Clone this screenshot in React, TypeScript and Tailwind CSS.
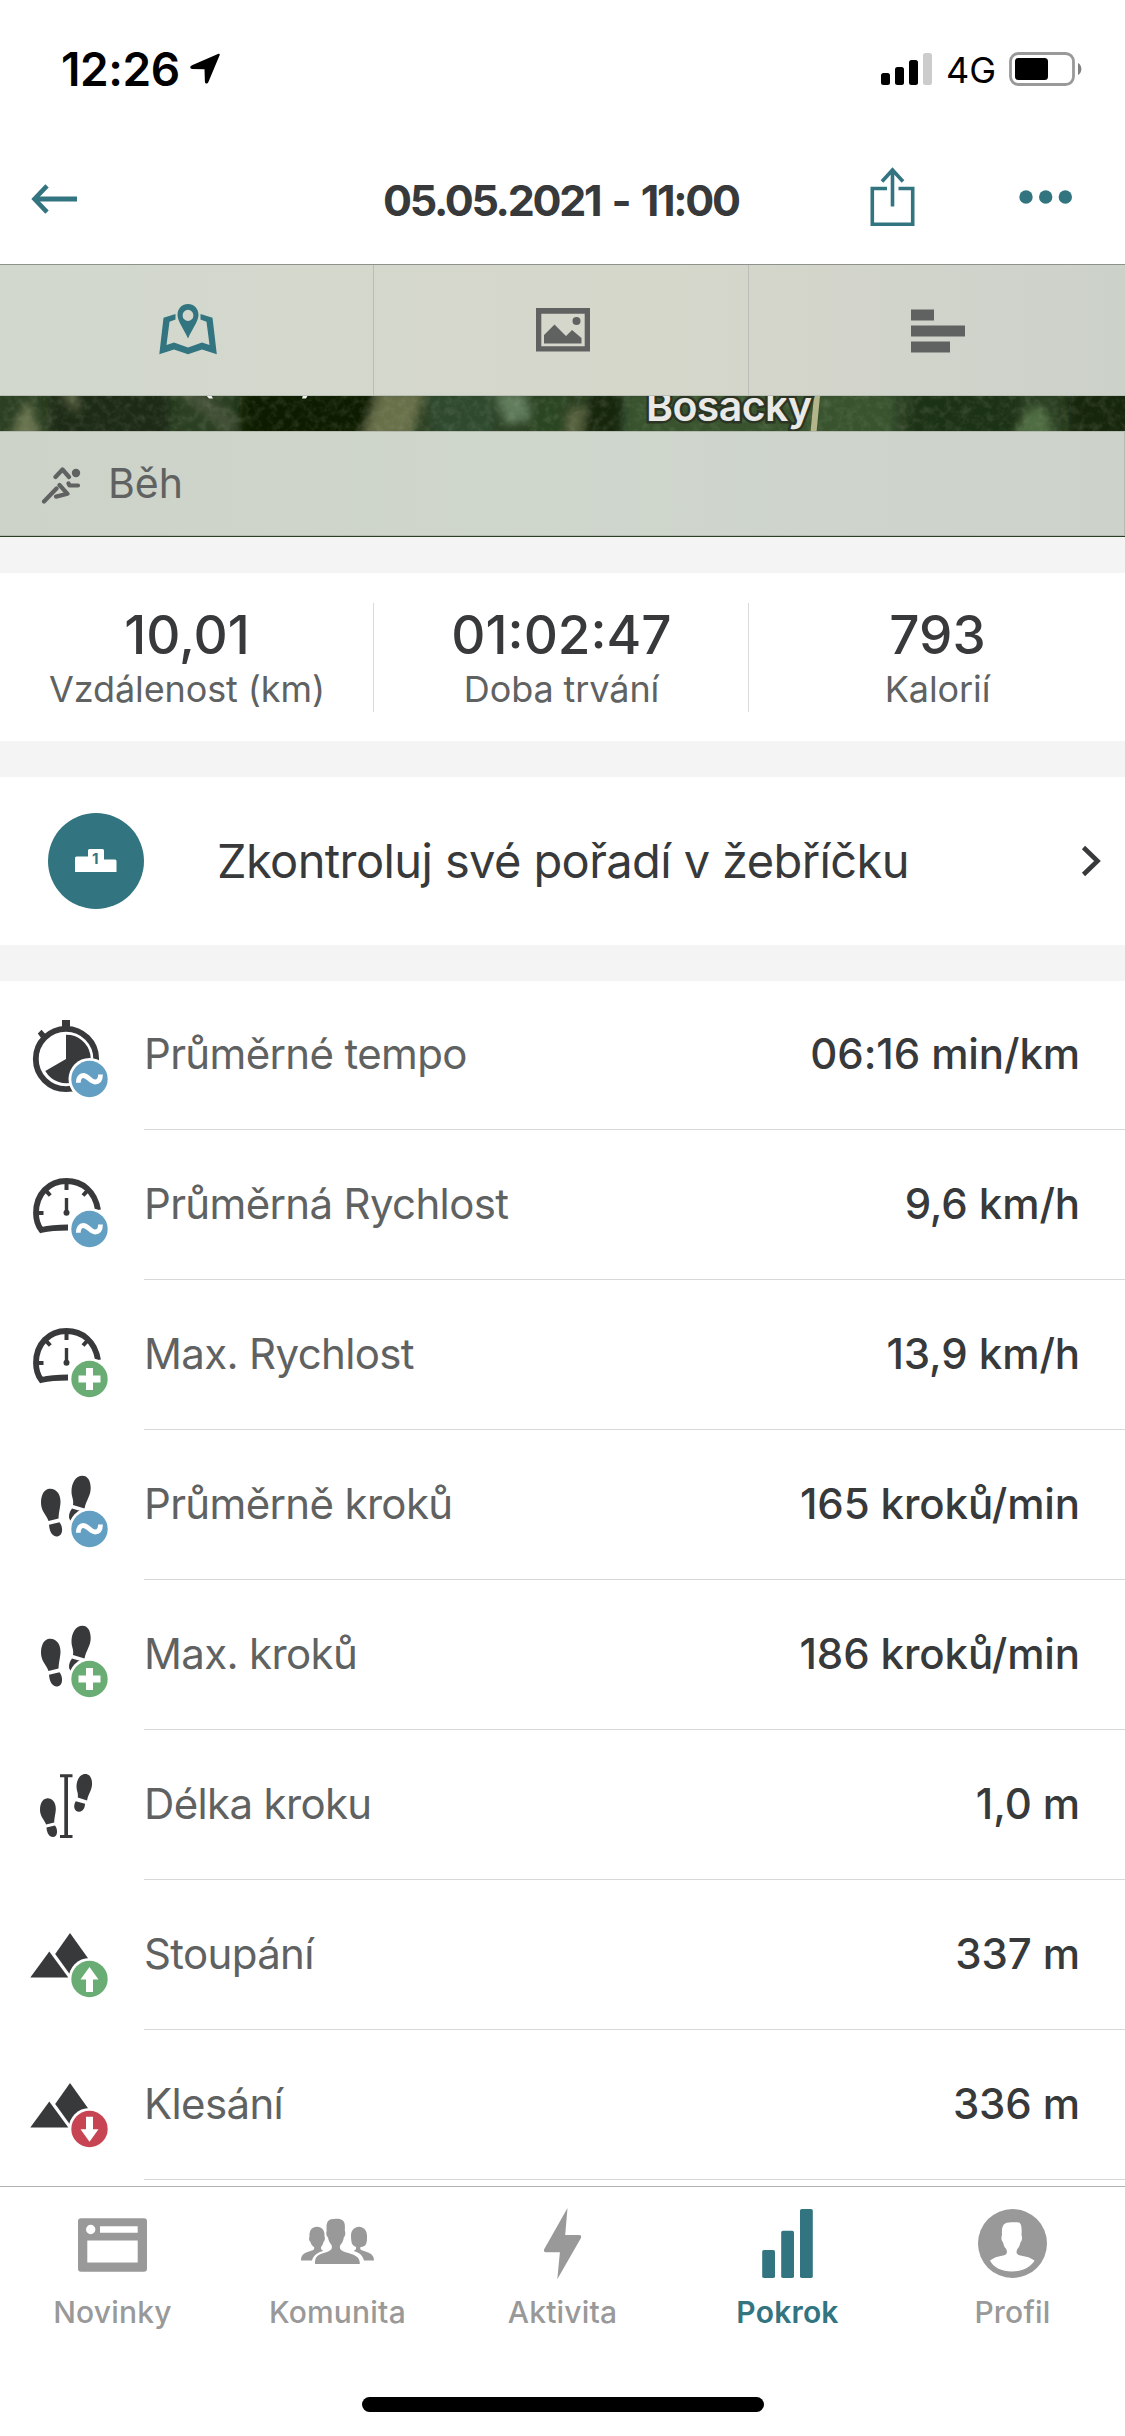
import React from 'react';

const DARK = '#37393a';
const TEAL = '#32747f';

function Badge({ kind }: { kind: string }) {
  const fill = kind === 'avg' ? '#629fc2' : kind === 'down' ? '#c74553' : '#69ac74';
  return (
    <g>
      <circle cx="89.500" cy="98" r="21" fill="#fff" />
      <circle cx="89.500" cy="98" r="18.200" fill={fill} />
      {kind === 'avg' && <path d="M78.300 101.700c0-4.700 2-7.200 5-7.200 4.700 0 7.200 6.500 11.700 6.500 3.700 0 5.500-2.500 5.500-7.500" fill="none" stroke="#fff" strokeWidth="4.800" />}
      {kind === 'plus' && <path d="M86 87h7v7.500h7.500v7H93v7.500h-7v-7.500h-7.500v-7H86z" fill="#fff" />}
      {kind === 'up' && <path d="M89.500 86l9 12.500H93V111h-7V98.500h-5.500z" fill="#fff" />}
      {kind === 'down' && <path d="M89.500 110.700l9-12.500H93V85.700h-7v12.500h-5.500z" fill="#fff" />}
    </g>
  );
}

function Stopwatch() {
  return (
    <g fill={DARK}>
      <circle cx="66" cy="78" r="30.200" fill="none" stroke={DARK} strokeWidth="5.800" />
      <path d="M62 39h8v8h-8zM37.800 52.500l3.700-3.700 5 5.400-4.500 4z" />
      <path d="M66 78V53.700A24.300 24.300 0 1 1 45.300 90z" />
    </g>
  );
}

function Gauge() {
  return (
    <g fill="none" stroke={DARK}>
      <path d="M98 79C95 60 82 50 66.500 50 49 50 36 63 36 82c0 6.500 1.800 12.500 5.300 17 8.500-2 18-2.500 26.700-2.500" strokeWidth="5.800" />
      <path d="M66.500 52v7M38 82h5.500M46.300 60.200l4 4.300M87 60.200l-4 4.300" strokeWidth="4" />
      <path d="M66.500 67v14" strokeWidth="3.400" />
      <circle cx="66.500" cy="81.800" r="3" fill={DARK} stroke="none" />
    </g>
  );
}

function LeftFoot() {
  return <path d="M49 57.800c7-.8 11.500 5 11.500 12.700 0 5-1.500 9-2 17l-10 2.500c-2-6-7.500-10-7.500-18 0-8 3-13.500 8-14.200zM49 93.700l10.500-2.500c3.500 4 4 13.500-2 14.200-5 .5-8-4.500-8.500-11.700z" />;
}

function RightFoot() {
  return <path d="M82.500 44.800c5 0 8.200 4.700 8.200 12.200 0 8-4.500 12-6.200 20.500l-11.500-3.500c1-6-1.500-7.500-1.500-13.500 0-8 4-15.700 11-15.700z" />;
}

function Steps() {
  return (
    <g fill={DARK}>
      <LeftFoot />
      <RightFoot />
      <path d="M72 77.500l12 3.500c0 6-3 11-8 11-6 0-10-6-4-14.500z" />
    </g>
  );
}

function Stride() {
  return (
    <g fill={DARK}>
      <path d="M60 43.300h12.500v3H68V104h4.500v3H60v-3h4.300V46.300H60z" />
      <g transform="translate(6.800 20.600) scale(.81)"><LeftFoot /></g>
      <g transform="translate(18.600 6.600) scale(.81)">
        <RightFoot />
        <path d="M70.500 78.500l11.500 3.300c0 5.500-3 10.200-7.500 9.800-6-.6-7.500-7-4-13.100z" />
      </g>
    </g>
  );
}

function Mountains() {
  return (
    <g fill={DARK}>
      <path d="M49.300 70.500L68.300 96.500h-38z" />
      <path d="M70 52l20 28-15 20.500L55.200 73z" />
    </g>
  );
}

const metrics = [
  { label: 'Průměrné tempo', value: '06:16 min/km', icon: <Stopwatch />, badge: 'avg' },
  { label: 'Průměrná Rychlost', value: '9,6 km/h', icon: <Gauge />, badge: 'avg' },
  { label: 'Max. Rychlost', value: '13,9 km/h', icon: <Gauge />, badge: 'plus' },
  { label: 'Průměrně kroků', value: '165 kroků/min', icon: <Steps />, badge: 'avg' },
  { label: 'Max. kroků', value: '186 kroků/min', icon: <Steps />, badge: 'plus' },
  { label: 'Délka kroku', value: '1,0 m', icon: <Stride />, badge: '' },
  { label: 'Stoupání', value: '337 m', icon: <Mountains />, badge: 'up' },
  { label: 'Klesání', value: '336 m', icon: <Mountains />, badge: 'down' },
];

const stats = [
  { value: '10,01', label: 'Vzdálenost (km)' },
  { value: '01:02:47', label: 'Doba trvání' },
  { value: '793', label: 'Kalorií' },
];

// Bottom bar icons share a 225x106 canvas, one per tab cell
const tabs = [
  {
    label: 'Novinky',
    icon: (
      <path fillRule="evenodd" d="M81 31.300h63a3 3 0 0 1 3 3v47.400a3 3 0 0 1-3 3H81a3 3 0 0 1-3-3V34.300a3 3 0 0 1 3-3zM90.700 37.800a4.700 4.700 0 1 0 .01 9.400a4.700 4.700 0 1 0-.01-9.400zM100 39.300v6.400h37.700v-6.400zM87.300 53.500v22h50.400v-22z" />
    ),
  },
  {
    label: 'Komunita',
    icon: (
      <g>
        <path d="M76 73.500c0-6 3-7.500 9.500-9.500 4-1.200 4-2 3.500-4-2-1.300-3-3-3.500-5-1.500-1-1.800-4-1-5.500-.5-6 2.500-9.700 7.500-9.700s8 3.700 7.500 9.700c.8 1.500.3 4.500-1 5.500-.5 2-1.500 4-2.500 5-.3 2 .5 3 2.500 4-6 1.500-10 4-11.500 9.500zM149 73.500c0-6-4-7.500-10-9.500-4-1.200-4-2-3.500-4 3-.3 5-1.300 5.500-3 .8-2 1.200-4 1-8.500 0-5-3.500-8.700-8-8.700s-8 3.700-8 8.700c0 5 .5 7.500 1.500 9 .8 1.200 2.300 1.800 3.500 2.500.5 2-.5 3-2.500 4 5 1 9 4 10.500 9.500z" />
        <path d="M90 77c0-8 2-9 12-12 5-1.700 5.500-4 4.500-7-2-2-3-5-3.500-7.500-2-1.500-2-5-1.300-7-.7-9 1-11.700 9.300-11.700 7 0 9.700 2 8.800 11.700.9 2 .7 5.500-1 7-.5 3-1.500 5.500-3.500 7.500-1 3-.5 5.300 4.500 7 10 3 15 4 15 12z" />
      </g>
    ),
  },
  {
    label: 'Aktivita',
    icon: <path d="M117.500 21l-2.300 27h14c2 0 2.500 1.500 1.600 3.200l-23.500 41 2.600-27H96c-2 0-2.600-1.600-1.700-3.200z" />,
  },
  {
    label: 'Pokrok',
    active: true,
    icon: (
      <g>
        <rect x="87.200" y="63" width="12.800" height="28" rx="1.800" />
        <rect x="106.200" y="43.700" width="12.800" height="47.300" rx="1.800" />
        <rect x="125" y="22" width="12.800" height="69" rx="1.800" />
      </g>
    ),
  },
  {
    label: 'Profil',
    icon: (
      <g>
        <circle cx="112.500" cy="56.500" r="34.500" />
        <path d="M90 73.500c4-3 7-4 12-4.800 5-.8 6-3 4-7-2-2-2.300-4-3-6.500-1.800-1.500-1.900-5-1-7.200-.5-9 1-12.700 9.500-12.700h6c4 0 4.500 5 4 12.700.9 2.200.8 5.700-1 7.200-.7 2.500-1 4.500-3 6.500-2 4-1 6.200 4 7 5 .8 9 1.800 13 4.800-4 7-12 11-22.500 11s-18.500-4-22-11z" fill="#fff" />
      </g>
    ),
  },
];

// Satellite imagery behind the translucent bars
function MapBackdrop() {
  return (
    <svg className="absolute inset-0" width="1125" height="273" viewBox="0 264 1125 273">
      <defs>
        <filter id="grain" x="0" y="0" width="100%" height="100%">
          <feTurbulence type="fractalNoise" baseFrequency=".13" numOctaves="4" seed="7" />
          <feColorMatrix values="0 0 0 0 .45  0 0 0 0 .5  0 0 0 0 .35  1.800 0 0 0 -.75" />
        </filter>
        <filter id="soft" x="-20%" y="-50%" width="140%" height="200%">
          <feGaussianBlur stdDeviation="5" />
        </filter>
      </defs>
      <rect y="264" width="1125" height="273" fill="#2b3f22" />
      <g filter="url(#soft)">
        <path d="M8 440l20-42 14 42z" fill="#6a7550" />
        <path d="M50 390h120v50H50z" fill="#1c2c13" />
        <path d="M60 390h15l4 25z" fill="#606a48" />
        <path d="M175 390h25l38 34-10 8z" fill="#46523a" />
        <path d="M240 390h135v50H240z" fill="#081c04" />
        <path d="M380 390h45l-14 50h-50z" fill="#68704a" />
        <path d="M425 390h70v50h-60z" fill="#2f4a2d" />
        <path d="M495 392h30l6 26-25 8z" fill="#5f7c5b" />
        <path d="M535 390h30v50h-40z" fill="#2c4420" />
        <path d="M565 440l4-30 17-4-6 34z" fill="#5a6340" />
        <path d="M590 390h33v50h-40z" fill="#14260e" />
        <path d="M625 390h270v50H625z" fill="#38532e" />
        <path d="M915 390h105v50H905z" fill="#1b3313" />
        <path d="M1012 440l18-33 14 0 12 33z" fill="#4f6d43" />
        <path d="M1065 390h70v50h-65z" fill="#12280b" />
      </g>
      <rect y="390" width="1125" height="46" filter="url(#grain)" opacity=".2" />
      <path d="M814 396h6l-3.500 36h-6z" fill="#b5b58c" />
      <path d="M206 395h5l2 3.500h-4zM303 395h5l-2 3.500h-4z" fill="#f1f1ee" />
      <text x="646" y="421" fontFamily="Inter, sans-serif" fontWeight="600" fontSize="41" textLength="166" fill="#e9e9e7" stroke="#2c3524" strokeWidth="5" paintOrder="stroke">Bošacky</text>
    </svg>
  );
}

export default function App() {
  return (
    <div className="w-[1125px] h-[2436px] bg-white flex flex-col overflow-hidden font-['Inter',sans-serif] text-[#37393a]">
      {/* Status bar */}
      <div className="h-[138px] shrink-0 flex items-center justify-between pl-[61px] pr-[42px] text-black">
        <div className="flex items-center">
          <span className="w-[129px] text-[46px] font-semibold tracking-[-0.4px] whitespace-nowrap">12:26</span>
          <svg width="30" height="31" viewBox="0 0 30 31" className="mt-[-2px]">
            <path d="M28.500.8L2 12.200c-2.500 1-2.200 3.600.3 3.700l12.200.3.400 12.300c.1 2.600 2.500 2.800 3.500.4L29.500 2.600C30 1.200 29.700.4 28.500.8z" />
          </svg>
        </div>
        <div className="flex items-center">
          <svg width="52" height="34" viewBox="0 0 52 34">
            <rect x="0" y="21" width="9" height="12" rx="2.500" />
            <rect x="14" y="15" width="9" height="18" rx="2.500" />
            <rect x="28" y="8" width="9" height="25" rx="2.500" />
            <rect x="42" y="1" width="9" height="32" rx="2.500" fill="#ccc" />
          </svg>
          <span className="ml-[13px] w-[63px] text-[36px] leading-none whitespace-nowrap pt-0.5">4G</span>
          <svg width="74" height="34" viewBox="0 0 74 34">
            <rect x="1.500" y="1.500" width="63" height="31" rx="8" fill="none" stroke="#999" strokeWidth="2.800" />
            <rect x="6" y="6" width="33" height="22" rx="3.500" />
            <path d="M69 11c4.500 2 4.500 10 0 12z" fill="#808080" />
          </svg>
        </div>
      </div>

      {/* Navigation */}
      <header className="h-[126px] shrink-0 flex items-center pl-[31px] pr-[52px]">
        <svg width="48" height="32" viewBox="0 0 48 32" className="mt-[-4px]" fill="none" stroke={TEAL} strokeWidth="5">
          <path d="M4 16h42" />
          <path d="M16 2.800L3.500 16 16 29.200" strokeWidth="4.600" />
        </svg>
        <h1 className="ml-[304px] w-[358px] mt-[-2px] text-[43px] font-bold tracking-[-2.3px] [word-spacing:3.500px] whitespace-nowrap">05.05.2021 - 11:00</h1>
        <svg width="46" height="60" viewBox="0 0 46 60" className="ml-[129px] mt-[-9px]" fill="none" stroke={TEAL} strokeWidth="3.600">
          <path d="M17 21.500H2.300v35.700h40.400V21.500H28.500M22.500 39.500V4M12 14.500L22.500 3 33 14.500" />
        </svg>
        <svg width="54" height="14" viewBox="0 0 54 14" className="ml-auto mt-[-8px]" fill={TEAL}>
          <circle cx="7" cy="7" r="6.700" />
          <circle cx="26.700" cy="7" r="6.700" />
          <circle cx="46.300" cy="7" r="6.700" />
        </svg>
      </header>

      {/* Map with overlay bars */}
      <section className="relative h-[273px] shrink-0 flex flex-col">
        <MapBackdrop />
        <div className="relative h-[132px] grid grid-cols-[374px_375px_376px] border-t border-[#8d938b] bg-linear-to-r from-[#d2d8ce] via-[#d6d7cb] via-60% to-[#ccd1ca]">
          <div className="flex items-center justify-center border-r border-b border-[#b9bfb6]">
            <svg width="58" height="54" viewBox="0 0 58 54" className="ml-0.5" fill={TEAL}>
              <path fillRule="evenodd" d="M29 1C23 1 18.500 5.500 18.500 12c0 6 6 13.500 10.500 23.500C33.500 25.500 39.500 18 39.500 12 39.500 5.500 35 1 29 1zm0 5.800a5.400 5.600 0 1 1 0 11.200a5.400 5.600 1 1 1 0-11.200z" />
              <path d="M16.500 11v5.500L10.500 18.800 7.500 42 15 39.500l14 5 14-5 7.500 2.500-3-23.200-6-2.300V11l12 3.700 4.300 36.600L43 46.500 29 51.300 15 46.500.3 51.300l4.200-36.600z" />
            </svg>
          </div>
          <div className="flex items-center justify-center border-r border-b border-[#b9bfb6]">
            <svg width="54" height="44" viewBox="0 0 54 44" className="ml-[3px]" fill="#606262">
              <path fillRule="evenodd" d="M0 0h54v43.500H0zM5.300 5.700v32.500h43.400V5.700z" />
              <path d="M8 35.500V27l10.500-10.500L30 28l6-6 9.500 8v5.500z" />
              <circle cx="40.500" cy="13" r="4" />
            </svg>
          </div>
          <div className="flex items-center justify-center border-b border-[#b9bfb6]">
            <svg width="54" height="44" viewBox="0 0 54 44" className="ml-0.5 mt-0.5" fill="#606262">
              <path d="M0 .5h23v11H0zM0 16.500h54v11H0zM0 32.500h39v11H0z" />
            </svg>
          </div>
        </div>
        <div className="relative h-[105px] mt-[35px] flex items-center pl-[41px] border-y border-r border-[#b5bbb1] bg-linear-to-r from-[#cdd3c9] via-[#cfd6cc] to-[#cdd3cb]">
          <svg width="40" height="38" viewBox="0 0 40 38" className="mt-1" fill="none" stroke="#606262" strokeWidth="4.200" strokeLinecap="round" strokeLinejoin="round">
            <circle cx="35" cy="6" r="4.200" fill="#606262" stroke="none" />
            <path d="M14.500 10l7-7.500 6.500 7.500M27.500 16.500l1 2H37M3 34.500l12.500-13M18.500 18l8 8.800-11.500 2.800" />
          </svg>
          <span className="ml-[27px] text-[41px] text-[#606262]">Běh</span>
        </div>
      </section>

      <main className="h-[1649px] shrink-0 flex flex-col gap-9 pt-9 bg-[#f4f4f4] overflow-hidden">
        {/* Totals */}
        <section className="h-[168px] shrink-0 bg-white grid grid-cols-[374px_375px_376px] py-[30px]">
          {stats.map((stat, i) => (
            <div key={stat.label} className={`flex flex-col items-center pl-px whitespace-nowrap ${i < 2 ? 'border-r border-[#dadada]' : ''}`}>
              <span className="h-[65px] leading-[65px] text-[53px] font-medium">{stat.value}</span>
              <span className="h-11 leading-[43px] text-[36px] tracking-[-0.1px] text-[#606262]">{stat.label}</span>
            </div>
          ))}
        </section>

        {/* Leaderboard */}
        <section className="h-[168px] shrink-0 bg-white flex items-center pl-12 pr-6">
          <div className="size-24 rounded-full bg-[#32747f] flex items-center justify-center">
            <div className="relative">
              <svg width="42" height="24" viewBox="0 0 42 24" fill="#fff">
                <path d="M0 9a1.500 1.500 0 0 1 1.500-1.500H13v-6A1.500 1.500 0 0 1 14.500 0h13A1.500 1.500 0 0 1 29 1.500v9h11a1.500 1.500 0 0 1 1.500 1.500v11H0z" />
              </svg>
              <span className="absolute left-[17px] top-[2px] text-[15px] leading-none font-bold text-[#32747f]">1</span>
            </div>
          </div>
          <span className="ml-[73px] text-[47px] tracking-[-0.6px] whitespace-nowrap">Zkontroluj své pořadí v žebříčku</span>
          <svg width="20" height="32" viewBox="0 0 20 32" className="ml-auto" fill="none" stroke={DARK} strokeWidth="4.600">
            <path d="M2.500 2.500L16.500 16 2.500 29.500" />
          </svg>
        </section>

        {/* Metrics */}
        <ul className="bg-white shrink-0 h-[1205px] overflow-hidden">
          {metrics.map((m) => (
            <li key={m.label} className="h-[150px] flex whitespace-nowrap">
              <svg width="144" height="150" viewBox="0 0 144 150" className="shrink-0">
                {m.icon}
                {m.badge && <Badge kind={m.badge} />}
              </svg>
              <div className="flex-1 h-[149px] flex items-center justify-between pr-[45px] pb-[3px] border-b border-[#d8d8d8] text-[42px]">
                <span className="tracking-[-0.65px] text-[#606262]">{m.label}</span>
                <span className="font-medium tracking-[-0.1px]">{m.value}</span>
              </div>
            </li>
          ))}
        </ul>
      </main>

      {/* Tab bar */}
      <nav className="flex-1 bg-white border-t border-[#b2b2b2] flex flex-col items-center">
        <div className="w-full grid grid-cols-5">
          {tabs.map((tab) => (
            <div key={tab.label} className={`flex flex-col items-center ${tab.active ? 'text-[#32747f] font-semibold' : 'text-[#999] font-medium'}`}>
              <svg width="225" height="106" viewBox="0 0 225 106" fill="currentColor">{tab.icon}</svg>
              <span className="h-10 leading-[38px] text-[30px] tracking-[0.2px]">{tab.label}</span>
            </div>
          ))}
        </div>
        <div className="mt-[64px] w-[402px] h-[15px] rounded-full bg-black" />
      </nav>
    </div>
  );
}
